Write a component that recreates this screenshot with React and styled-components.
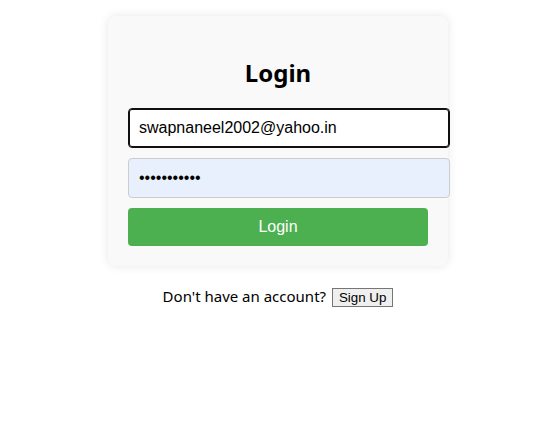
import styled, { createGlobalStyle } from "styled-components";

const GlobalStyle = createGlobalStyle`
  body {
    margin: 8px;
    background: #ffffff;
    font-family: "Noto Sans", "Open Sans", sans-serif;
    color: #000000;
  }
`;

const Page = styled.div`
  display: flex;
  flex-direction: column;
  align-items: center;
  padding: 8px 0 0 2px;
`;

const Card = styled.div`
  box-sizing: border-box;
  width: 340px;
  padding: 20px;
  background: #f9f9f9;
  border-radius: 8px;
  box-shadow: 0 0 10px rgba(0, 0, 0, 0.1);
`;

const Title = styled.h2`
  margin: 21px 0 19px;
  text-align: center;
  font-size: 24px;
  font-weight: 700;
  line-height: 32px;
`;

const Input = styled.input`
  display: block;
  width: 100%;
  height: 18px;
  margin: 0 0 10px;
  padding: 10px;
  border: 1px solid ${(p) => (p.$active ? "#101010" : "#cccccc")};
  box-shadow: ${(p) => (p.$active ? "inset 0 0 0 1px #101010" : "none")};
  border-radius: 4px;
  background: ${(p) => (p.$filled ? "#e8f0fe" : "#ffffff")};
  font-family: "Liberation Sans", Arial, sans-serif;
  font-size: 16px;
  color: #000000;
  outline: none;
`;

const SubmitButton = styled.button`
  display: block;
  width: 100%;
  height: 38px;
  padding: 0;
  border: none;
  border-radius: 4px;
  background: #4caf50;
  color: #ffffff;
  font-family: "Liberation Sans", Arial, sans-serif;
  font-size: 16px;
  cursor: pointer;
`;

const Footer = styled.p`
  margin: 20px 0 0;
  font-size: 15px;
  text-align: center;
`;

const SignUpButton = styled.button`
  padding: 1px 6px;
  margin-left: 2px;
  border: 1px solid #767676;
  border-radius: 0;
  background: #efefef;
  font-family: "Liberation Sans", Arial, sans-serif;
  font-size: 13.333px;
  color: #000000;
`;

export default function App() {
  return (
    <>
      <GlobalStyle />
      <Page>
        <Card>
          <Title>Login</Title>
          <Input $active type="text" defaultValue="swapnaneel2002@yahoo.in" />
          <Input $filled type="password" defaultValue="12345678901" />
          <SubmitButton>Login</SubmitButton>
        </Card>
        <Footer>
          Don't have an account? <SignUpButton>Sign Up</SignUpButton>
        </Footer>
      </Page>
    </>
  );
}
